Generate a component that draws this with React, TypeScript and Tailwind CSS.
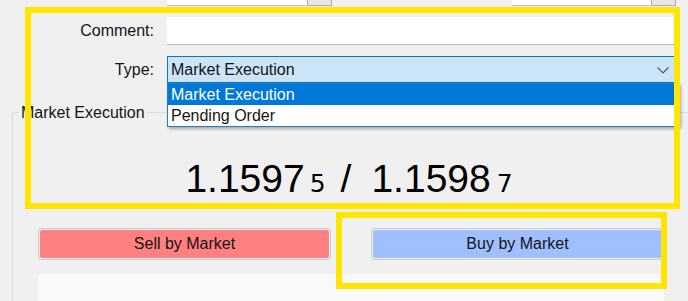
export default function App() {
  return (
    <div className="relative h-[301px] w-[688px] overflow-hidden bg-[#f0f0f0] font-['Liberation_Sans',Arial,sans-serif] text-[16px] text-[#141414]">
      {/* Stop Loss / Take Profit row, scrolled mostly out of view */}
      <div className="mt-[-22px] flex h-[28px] items-center">
        <div className="w-[154px] text-right">Stop Loss:</div>
        <div className="ml-[13px] flex h-full">
          <div className="w-[139px] border-b border-[#bcbcbc] bg-white" />
          <div className="ml-px flex w-[25px] flex-col items-center justify-end border border-[#adadad] bg-[#e6e6e6] pb-[5px]">
            <svg width="7" height="4" viewBox="0 0 7 4">
              <path d="M0 0 L7 0 L3.5 4 Z" fill="#333" />
            </svg>
          </div>
        </div>
        <div className="w-[180px] pr-[13px] text-right">Take Profit:</div>
        <div className="flex h-full">
          <div className="w-[138px] border-b border-[#bcbcbc] bg-white" />
          <div className="ml-px flex w-[25px] flex-col items-center justify-end border border-[#adadad] bg-[#e6e6e6] pb-[5px]">
            <svg width="7" height="4" viewBox="0 0 7 4">
              <path d="M0 0 L7 0 L3.5 4 Z" fill="#333" />
            </svg>
          </div>
        </div>
      </div>

      {/* Comment */}
      <div className="mt-[11px] flex h-[28px] items-center">
        <div className="w-[154px] text-right">Comment:</div>
        <div className="ml-[13px] h-full w-[512px] border-b border-[#bcbcbc] bg-white" />
      </div>

      {/* Type */}
      <div className="mt-[11px] flex h-[27px] items-center">
        <div className="w-[154px] text-right">Type:</div>
        <div className="relative ml-[13px] h-full w-[512px]">
          <div className="flex h-full items-center justify-between border border-[#0078d7] bg-[#cce4f7] pl-[3px] pr-[9px]">
            <span>Market Execution</span>
            <svg width="12" height="7" viewBox="0 0 12 7" className="mt-[2px]">
              <path d="M0.5 0.5 L6 6 L11.5 0.5" fill="none" stroke="#5a5a5a" strokeWidth="1.2" />
            </svg>
          </div>
          <div className="absolute left-0 top-full z-10 w-full border border-[#2a7ac8] bg-white shadow-[2px_2px_3px_rgba(0,0,0,0.3)]">
            <div className="flex h-[21px] items-center bg-[#0078d7] pl-[3px] text-white">Market Execution</div>
            <div className="flex h-[21px] items-center bg-white pl-[3px]">Pending Order</div>
          </div>
        </div>
      </div>

      {/* Market Execution group */}
      <div className="relative ml-[12px] mt-[29px] h-[240px] w-[678px] border-l border-r border-t border-[#dcdcdc] px-[25px] pt-[46px]">
        <span className="absolute left-[6px] top-[-10px] bg-[#f0f0f0] px-[2px] leading-[20px]">Market Execution</span>

        <div className="flex items-baseline justify-center pr-[4px] text-[39px] leading-[39px] text-black">
          <span>1.1597</span>
          <span className="ml-[5px] font-['DejaVu_Sans',sans-serif] text-[25px] leading-[25px]">5</span>
          <span className="ml-[15px]">/</span>
          <span className="ml-[20px]">1.1598</span>
          <span className="ml-[6px] font-['DejaVu_Sans',sans-serif] text-[25px] leading-[25px]">7</span>
        </div>

        <div className="mt-[30px] grid h-[32px] grid-cols-2 gap-[40px]">
          <div className="rounded-[3px] border border-[#cbcbcb] p-px">
            <div className="flex h-full items-center justify-center rounded-[2px] bg-[#ff8080]">Sell by Market</div>
          </div>
          <div className="rounded-[3px] border border-[#cbcbcb] p-px">
            <div className="flex h-full items-center justify-center rounded-[2px] bg-[#a0bfff]">Buy by Market</div>
          </div>
        </div>

        <div className="mt-[14px] h-[60px] rounded-t-[2px] bg-[#f9f9f9]" />
      </div>

      {/* highlight frames */}
      <div className="pointer-events-none absolute left-[25px] top-[7px] z-20 h-[202px] w-[655px] border-[6px] border-[#ffe600]" />
      <div className="pointer-events-none absolute left-[336px] top-[212px] z-20 h-[77px] w-[331px] border-[6px] border-[#ffe600]" />
    </div>
  )
}
